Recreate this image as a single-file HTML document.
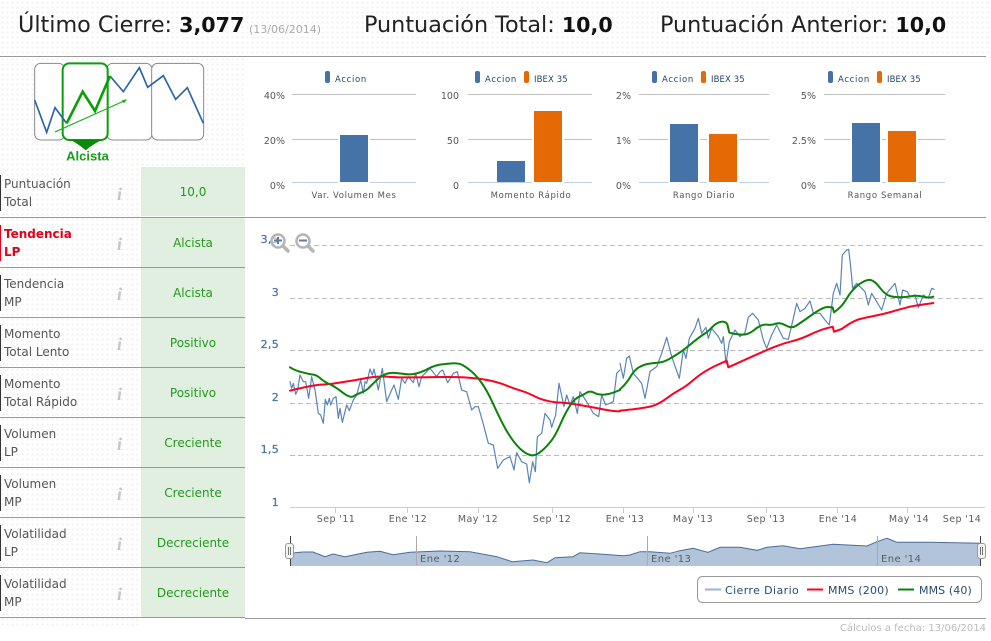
<!DOCTYPE html>
<html lang="es"><head><meta charset="utf-8"><title>Análisis</title>
<style>
html,body{margin:0;padding:0;background:#fff}
#p{position:relative;width:991px;height:641px;overflow:hidden;font-family:"DejaVu Sans","Liberation Sans",sans-serif;background:#fff}
.dots{position:absolute;background-color:#fff;background-image:radial-gradient(circle,#f1f1f1 1px,transparent 1.2px);background-size:5px 5px}
.hl{position:absolute;height:1px;background:#999}
.h{position:absolute;top:8px;font-size:22.3px;line-height:34px;color:#222;white-space:nowrap}
.h b{font-weight:bold;color:#111;font-size:20.6px}
.d{position:absolute;left:249px;top:16px;font-size:11px;line-height:28px;color:#aaa;white-space:nowrap}
.row{position:absolute;left:0;width:245px;height:50px}
.row .bar{position:absolute;left:0;top:8px;width:1px;height:36px;background:#333}
.row .t{position:absolute;left:4px;top:8px;font-size:12px;line-height:18px;color:#555}
.row .i{position:absolute;left:117px;top:17px;font:italic bold 18px/20px "Liberation Serif",serif;color:#c6c6c6}
.row .v{position:absolute;left:141px;top:0;width:104px;height:49px;line-height:50px;text-align:center;background:#e1efe0;color:#229a1d;font-size:12px}
.row.r .bar{background:#e2001a}.row.r .t{color:#e2001a;font-weight:bold}
.sep{position:absolute;left:0;width:245px;height:1px;background:#999}
svg{position:absolute;left:0;top:0}
svg text{font-family:"DejaVu Sans",sans-serif}
.ax{font-size:9.5px;fill:#555;text-anchor:end}
.lb{font-size:8.5px;fill:#555;text-anchor:middle;letter-spacing:.62px}
.lg{font-size:8.5px;fill:#1f4266;letter-spacing:.65px}
.ib{font-size:8.5px;fill:#1f4266;letter-spacing:.1px}
.ya{font-size:11px;fill:#4572a7;text-anchor:end;stroke:#4572a7;stroke-width:.25px;letter-spacing:.3px}
.xa{font-size:9.5px;fill:#5c5c5c;text-anchor:middle;letter-spacing:.4px}
.leg{font-size:11px;fill:#274b6d}
</style></head><body><div id="p">
<div class="dots" style="left:0;top:0;width:991px;height:56px"></div>
<div class="dots" style="left:0;top:57px;width:245px;height:110px"></div>
<div class="dots" style="left:0;top:167px;width:141px;height:461px"></div>
<div class="hl" style="left:0;top:56px;width:986px"></div>
<div class="hl" style="left:0;top:217px;width:986px"></div>
<div class="hl" style="left:245px;top:618px;width:741px"></div>

<div class="h" style="left:18px">Último Cierre: <b>3,077</b></div>
<div class="d">(13/06/2014)</div>
<div class="h" style="left:364px">Puntuación Total: <b>10,0</b></div>
<div class="h" style="left:660px">Puntuación Anterior: <b>10,0</b></div>

<div class="row" style="top:167px"><div class="bar"></div><div class="t">Puntuación<br>Total</div><div class="i">i</div><div class="v">10,0</div></div>
<div class="row r" style="top:217px"><div class="bar"></div><div class="t">Tendencia<br>LP</div><div class="i">i</div><div class="v" style="top:1px">Alcista</div></div>
<div class="row" style="top:267px"><div class="bar"></div><div class="t">Tendencia<br>MP</div><div class="i">i</div><div class="v" style="top:1px">Alcista</div></div>
<div class="row" style="top:317px"><div class="bar"></div><div class="t">Momento<br>Total Lento</div><div class="i">i</div><div class="v" style="top:1px">Positivo</div></div>
<div class="row" style="top:367px"><div class="bar"></div><div class="t">Momento<br>Total Rápido</div><div class="i">i</div><div class="v" style="top:1px">Positivo</div></div>
<div class="row" style="top:417px"><div class="bar"></div><div class="t">Volumen<br>LP</div><div class="i">i</div><div class="v" style="top:1px">Creciente</div></div>
<div class="row" style="top:467px"><div class="bar"></div><div class="t">Volumen<br>MP</div><div class="i">i</div><div class="v" style="top:1px">Creciente</div></div>
<div class="row" style="top:517px"><div class="bar"></div><div class="t">Volatilidad<br>LP</div><div class="i">i</div><div class="v" style="top:1px">Decreciente</div></div>
<div class="row" style="top:567px"><div class="bar"></div><div class="t">Volatilidad<br>MP</div><div class="i">i</div><div class="v" style="top:1px">Decreciente</div></div>
<div class="sep" style="top:267px"></div><div class="sep" style="top:317px"></div><div class="sep" style="top:367px"></div><div class="sep" style="top:417px"></div><div class="sep" style="top:467px"></div><div class="sep" style="top:517px"></div><div class="sep" style="top:567px"></div><div class="sep" style="top:617px"></div>

<svg width="991" height="641" viewBox="0 0 991 641" xmlns="http://www.w3.org/2000/svg">
<!-- thumbnail -->
<g transform="scale(.33333)" fill="none">
<rect x="104" y="190" width="90" height="230" rx="18" fill="#fff" stroke="#888" stroke-width="3"/>
<rect x="320" y="190" width="136" height="230" rx="18" fill="#fff" stroke="#888" stroke-width="3"/>
<rect x="455" y="190" width="156" height="230" rx="18" fill="#fff" stroke="#888" stroke-width="3"/>
<rect x="188" y="190" width="135" height="230" rx="20" fill="#fff" stroke="#0b9e0b" stroke-width="6"/>
<polyline points="104,300 140,397 165,323 200,370" stroke="#2a64ad" stroke-width="5"/>
<polyline points="330,228 370,275 418,203 443,262 490,227 527,298 562,263 610,370" stroke="#2a64ad" stroke-width="5"/>
<polyline points="200,370 248,275 285,333 330,228" stroke="#0b9e0b" stroke-width="8"/>
<line x1="165" y1="396" x2="372" y2="303" stroke="#1bb01b" stroke-width="3.5"/>
<polygon points="382,298 366,300 371,310" fill="#1bb01b"/>
<path d="M212 420H305Q280 432 257 451Q235 432 212 420Z" fill="#0a8a0a"/>
</g>
<text x="87.500" y="160.500" text-anchor="middle" style="font:bold 13px 'Liberation Sans',sans-serif" fill="#15a015">Alcista</text>

<!-- bar chart grids -->
<g stroke="#c0c0c0" stroke-width="1" shape-rendering="crispEdges">
<path d="M292 94.500H416M292 139.500H416M468 94.500H592M468 139.500H592M639 94.500H769M639 139.500H769M824 94.500H945M824 139.500H945"/>
</g>
<g stroke="#c0d0e0" stroke-width="1" shape-rendering="crispEdges">
<path d="M292 182.500H416M468 182.500H592M639 182.500H769M824 182.500H945"/>
</g>
<g stroke="#fff" stroke-width="2" shape-rendering="crispEdges">
<rect x="339" y="134" width="30" height="48" fill="#fff"/>
<rect x="533" y="110" width="30" height="72" fill="#fff"/>
<rect x="669" y="123" width="30" height="59" fill="#fff"/>
<rect x="708" y="133" width="30" height="49" fill="#fff"/>
<rect x="851" y="122" width="30" height="60" fill="#fff"/>
<rect x="887" y="130" width="30" height="52" fill="#fff"/>
</g>
<g shape-rendering="crispEdges">
<rect x="340" y="135" width="28" height="47" fill="#4572a7"/>
<rect x="497" y="161" width="28" height="21" fill="#4572a7"/>
<rect x="534" y="111" width="28" height="71" fill="#e56a05"/>
<rect x="670" y="124" width="28" height="58" fill="#4572a7"/>
<rect x="709" y="134" width="28" height="48" fill="#e56a05"/>
<rect x="852" y="123" width="28" height="59" fill="#4572a7"/>
<rect x="888" y="131" width="28" height="51" fill="#e56a05"/>
</g>
<g class="axs">
<text class="ax" x="285" y="99">40%</text><text class="ax" x="285" y="144">20%</text><text class="ax" x="285" y="189">0%</text>
<text class="ax" x="459" y="99">100</text><text class="ax" x="459" y="144">50</text><text class="ax" x="459" y="189">0</text>
<text class="ax" x="631" y="99">2%</text><text class="ax" x="631" y="144">1%</text><text class="ax" x="631" y="189">0%</text>
<text class="ax" x="816" y="99">5%</text><text class="ax" x="816" y="144">2.5%</text><text class="ax" x="816" y="189">0%</text>
</g>
<text class="lb" x="354" y="198">Var. Volumen Mes</text>
<text class="lb" x="531" y="198">Momento Rápido</text>
<text class="lb" x="704" y="198">Rango Diario</text>
<text class="lb" x="885" y="198">Rango Semanal</text>
<g>
<rect x="325" y="71" width="5" height="12" rx="2" fill="#4572a7"/><text class="lg" x="335" y="82">Accion</text>
<rect x="475" y="71" width="5" height="12" rx="2" fill="#4572a7"/><text class="lg" x="485" y="82">Accion</text>
<rect x="524" y="71" width="5" height="12" rx="2" fill="#e56a05"/><text class="ib" x="534" y="82">IBEX 35</text>
<rect x="652" y="71" width="5" height="12" rx="2" fill="#4572a7"/><text class="lg" x="662" y="82">Accion</text>
<rect x="701" y="71" width="5" height="12" rx="2" fill="#e56a05"/><text class="ib" x="711" y="82">IBEX 35</text>
<rect x="828" y="71" width="5" height="12" rx="2" fill="#4572a7"/><text class="lg" x="838" y="82">Accion</text>
<rect x="877" y="71" width="5" height="12" rx="2" fill="#e56a05"/><text class="ib" x="887" y="82">IBEX 35</text>
</g>

<!-- main chart -->
<g stroke="#bbb" stroke-width="1" stroke-dasharray="5 3" shape-rendering="crispEdges">
<path d="M290 245.500H985M290 298.500H985M290 350.500H985M290 403.500H985M290 455.500H985"/>
</g>
<path d="M290 507.500H985M335.500 507V513M407.500 507V513M478.500 507V513M552.500 507V513M623.500 507V513M693.500 507V513M766.500 507V513M837.500 507V513M907.500 507V513" stroke="#c0d0e0" fill="none" shape-rendering="crispEdges"/>
<text class="ya" x="279" y="243">3,5</text><text class="ya" x="279" y="296">3</text><text class="ya" x="279" y="348">2,5</text><text class="ya" x="279" y="401">2</text><text class="ya" x="279" y="453">1,5</text><text class="ya" x="279" y="506">1</text>
<text class="xa" x="336" y="522">Sep '11</text><text class="xa" x="408" y="522">Ene '12</text><text class="xa" x="478" y="522">May '12</text><text class="xa" x="552" y="522">Sep '12</text><text class="xa" x="625" y="522">Ene '13</text><text class="xa" x="693" y="522">May '13</text><text class="xa" x="766" y="522">Sep '13</text><text class="xa" x="838" y="522">Ene '14</text><text class="xa" x="909" y="522">May '14</text><text class="xa" x="962" y="522">Sep '14</text>

<g fill="none" stroke-linejoin="round" stroke-linecap="round">
<g transform="translate(250 340) scale(.33333)" stroke="#5a84b8" stroke-width="3.6">
<polyline points="120,125 125,145 130,130 137,163 143,150 150,105 160,125 167,125 176,175 185,110 195,150 205,220 212,225 220,250 226,178 232,195 238,175 242,195 250,175 258,170 265,235 270,205 277,247 290,195 298,212 310,180 320,165 332,120 340,160 345,125 350,130 360,87 367,105 372,87 385,150 397,85 410,185 425,150 432,135 445,178 455,115 465,130 475,110 490,128 497,100 507,140 515,110 530,95 540,85 560,110 570,95 578,90 593,128 610,100 622,95 635,150 650,155 665,210 675,200 685,200 698,245 715,310 730,315 743,385 760,360 780,350 792,390 800,338 815,365 830,372 838,428 848,365 856,395 862,290 875,280 885,220 900,240 905,262 917,225 927,130 942,200 950,165 960,195 970,170 982,220 990,155 1010,185 1030,220 1046,230 1055,165 1067,195 1090,185 1100,100 1110,90"/>
</g>
<g transform="translate(620 230) scale(.33333)">
<polyline stroke="#5a84b8" stroke-width="3.6" points="0,400 10,445 20,385 28,378 40,430 65,460 75,505 90,425 110,410 125,370 140,322 155,380 178,445 190,360 198,385 208,325 225,295 235,265 245,310 258,292 265,325 275,295 295,320 305,340 310,320 318,400 328,335 345,300 360,320 375,308 385,262 398,250 415,270 430,330 440,355 455,315 470,285 490,325 505,328 520,265 530,220 540,245 555,235 570,213 580,250 600,250 615,270 628,285 640,190 650,160 660,195 667,75 680,60 686,58 692,110 698,175 710,160 735,185 745,225 755,190 770,215 785,240 800,190 825,160 840,225 848,180 862,185 870,200 885,195 895,233 910,195 925,205 935,175 942,178"/>
</g>
<g transform="translate(250 340) scale(.33333)" stroke="#ff0022" stroke-width="6">
<path d="M120,152Q190,135 215,134Q240,133 280,126Q320,120 350,114Q380,108 410,110Q440,113 480,112Q520,112 580,111Q640,110 685,116Q730,122 760,133Q790,145 810,151Q830,157 850,167Q870,178 890,182Q910,187 935,188Q960,190 995,196Q1030,202 1060,208Q1090,214 1110,214"/>
</g>
<g transform="translate(620 230) scale(.33333)" stroke="#ff0022" stroke-width="6">
<path d="M0,542Q80,534 100,527Q120,520 140,505Q160,490 180,479Q200,468 225,446Q250,425 285,408L320,392L325,412L382,386Q440,360 465,350Q490,340 515,334Q540,328 570,314Q600,300 619,295L638,290L642,305L665,297Q700,272 720,267Q740,262 770,256Q800,250 825,242Q850,235 870,230Q890,226 940,219"/>
</g>
<g transform="translate(250 340) scale(.33333)" stroke="#0a830a" stroke-width="6">
<path d="M120,82Q135,92 157,97Q180,103 190,104Q200,105 212,116Q225,127 240,133Q255,140 277,157Q300,175 310,169Q320,163 335,157Q350,152 362,138Q375,125 387,114Q400,103 415,100Q430,97 455,101Q480,106 500,100Q520,95 535,86Q550,78 570,74Q590,71 607,70Q625,69 637,75Q650,82 665,95Q680,108 695,129Q710,150 725,182Q740,215 755,245Q770,275 785,296Q800,318 817,332Q835,346 847,346Q860,346 872,335Q885,325 900,307Q915,290 930,255Q945,220 960,197Q975,175 987,170Q1000,165 1010,158Q1020,152 1032,158Q1045,165 1062,164Q1080,163 1110,150"/>
</g>
<g transform="translate(620 230) scale(.33333)" stroke="#0a830a" stroke-width="6">
<path d="M0,478Q20,460 30,442Q40,425 52,415Q65,406 82,402Q100,399 116,398Q133,397 156,382Q180,368 195,356Q210,345 225,332Q240,320 252,312Q265,305 275,293Q285,282 297,277Q310,272 318,278L322,283L328,308Q345,313 365,314Q385,315 405,298Q425,282 440,284Q455,286 467,281Q480,277 497,286Q515,296 527,288Q540,280 575,255Q610,230 624,231L638,232L642,247Q665,232 680,206Q695,180 717,163Q740,147 752,150Q765,153 782,176Q800,200 825,201Q850,203 870,199Q890,195 910,200Q930,205 940,200"/>
</g>
</g>

<!-- zoom icons -->
<g fill="none">
<circle cx="278" cy="241" r="6.500" stroke="#b5b5b5" stroke-width="2.500" fill="#fff" fill-opacity=".5"/>
<line x1="283" y1="246" x2="288" y2="251" stroke="#b5b5b5" stroke-width="3.500" stroke-linecap="round"/>
<path d="M274 240.500H282M278 237V244" stroke="#5d7ea3" stroke-width="2"/>
<circle cx="303" cy="241" r="6.500" stroke="#b5b5b5" stroke-width="2.500" fill="#fff"/>
<line x1="308" y1="246" x2="313" y2="251" stroke="#b5b5b5" stroke-width="3.500" stroke-linecap="round"/>
<path d="M299 240.500H307" stroke="#5d7ea3" stroke-width="2"/>
</g>

<!-- navigator -->
<path d="M290 566V555L295 552.700L303 552L313 552L325 556.700L333 554L345 556.700L367 552.300L380 551.300L393 554.700L410 552.300L440 551L470 551.700L497 556.700L512 561.700L533 560L547 562.700L555 557.700L573 556.700L580 552.700L603 554.300L623 555.700L630 555L640 551.700L650 551.700L670 553.300L680 550.700L693 548.300L708 552.300L720 547.300L740 547.300L757 550.300L767 547.300L783 545.700L800 548.700L833 544.300L867 546L877 541.700L887 538.300L897 542.300L930 542.300L981 543.300V566Z" fill="#b2c4da" stroke="none"/>
<path d="M290 555L295 552.700L303 552L313 552L325 556.700L333 554L345 556.700L367 552.300L380 551.300L393 554.700L410 552.300L440 551L470 551.700L497 556.700L512 561.700L533 560L547 562.700L555 557.700L573 556.700L580 552.700L603 554.300L623 555.700L630 555L640 551.700L650 551.700L670 553.300L680 550.700L693 548.300L708 552.300L720 547.300L740 547.300L757 550.300L767 547.300L783 545.700L800 548.700L833 544.300L867 546L877 541.700L887 538.300L897 542.300L930 542.300L981 543.300" fill="none" stroke="#4a6c9a" stroke-width="1"/>
<path d="M416.500 536V566M647.500 536V566M877.500 536V566" stroke="#aaa" shape-rendering="crispEdges"/>
<text x="420" y="562" style="font-size:10px;letter-spacing:.4px" fill="#5c5c5c">Ene '12</text>
<text x="651" y="562" style="font-size:10px;letter-spacing:.4px" fill="#5c5c5c">Ene '13</text>
<text x="881" y="562" style="font-size:10px;letter-spacing:.4px" fill="#5c5c5c">Ene '14</text>
<path d="M290.500 536V566M980.500 536V566" stroke="#444" shape-rendering="crispEdges"/>
<rect x="285.500" y="543.500" width="8" height="15" rx="2.500" fill="#f2f2f2" stroke="#999"/>
<rect x="977.500" y="543.500" width="8" height="15" rx="2.500" fill="#f2f2f2" stroke="#999"/>
<path d="M288.500 547V555M290.500 547V555M980.500 547V555M982.500 547V555" stroke="#777" shape-rendering="crispEdges"/>

<!-- legend -->
<rect x="697.500" y="576.500" width="284" height="26" rx="5" fill="#fff" stroke="#999"/>
<path d="M705 589.500H721" stroke="#9db5d4" stroke-width="2"/>
<path d="M807 589.500H823" stroke="#ff0022" stroke-width="2"/>
<path d="M898 589.500H914" stroke="#0a830a" stroke-width="2"/>
<text class="leg" x="725" y="594" style="letter-spacing:.4px">Cierre Diario</text>
<text class="leg" x="828" y="594" style="letter-spacing:.2px">MMS (200)</text>
<text class="leg" x="919" y="594" style="letter-spacing:.1px">MMS (40)</text>
<text x="986" y="631" text-anchor="end" style="font-size:10px" fill="#bbb">Cálculos a fecha: 13/06/2014</text>
</svg>
</div></body></html>
